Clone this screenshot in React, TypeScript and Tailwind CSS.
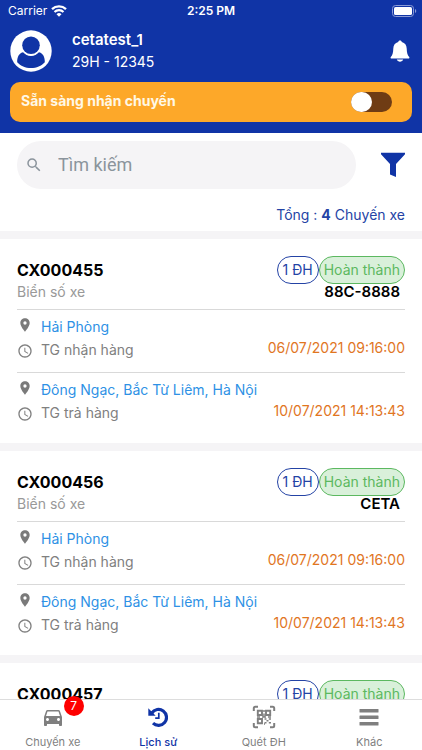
import React, { useState } from "react";
import { MdAccessTime, MdDirectionsCar, MdPlace, MdSearch } from "react-icons/md";

const trips = [
  { code: "CX000455", plate: "88C-8888" },
  { code: "CX000456", plate: "CETA" },
  { code: "CX000457", plate: "88C-8888" },
];

function StatusBar() {
  return (
    <div className="grid grid-cols-3 items-center h-[22px] px-2">
      <div className="flex items-center gap-1">
        <span className="text-[12px] leading-4">Carrier</span>
        <svg viewBox="0 0 16 12" className="w-4 h-3" fill="none">
          <path d="M1 4.200a10.200 10.200 0 0 1 14 0" stroke="#fff" strokeWidth="2.300" />
          <path d="M3.500 7a6.400 6.400 0 0 1 9 0" stroke="#fff" strokeWidth="2.100" />
          <path d="M8 11.800 5.500 9.200a3.600 3.600 0 0 1 5 0z" fill="#fff" />
        </svg>
      </div>
      <span className="text-[12px] leading-4 font-semibold text-center">
        2:25 PM
      </span>
      <svg viewBox="0 0 26 12" className="w-[26px] h-3 justify-self-end -mr-1">
        <rect x="0.5" y="0.5" width="21" height="11" rx="3" fill="none" stroke="#8b9bd6" />
        <rect x="2" y="2" width="18" height="8" rx="1.6" fill="#fff" />
        <path d="M23 4v4a2.200 2.200 0 0 0 0-4z" fill="#8b9bd6" />
      </svg>
    </div>
  );
}

function Header() {
  const [ready, setReady] = useState(false);
  return (
    <header className="bg-[#1034a6] text-white pb-[11px] shrink-0">
      <StatusBar />
      <div className="flex items-center pl-[10px] pr-3 pb-[2px] h-[60px]">
        <svg viewBox="0 0 42 42" className="w-[42px] h-[42px]">
          <circle cx="21" cy="21" r="20.700" fill="#fff" />
          <path
            d="M7.200 32.200C7 27 9.500 22.600 13.300 22.300C15 24.500 17.800 26 21 26S27 24.500 28.700 22.300C32.500 22.600 35 27 34.800 32.200C31.500 35.800 26.500 38 21 38S10.500 35.800 7.200 32.200z"
            fill="#1034a6"
          />
          <circle cx="21" cy="15.200" r="10.300" fill="#fff" />
          <circle cx="21" cy="15.200" r="8.800" fill="#1034a6" />
        </svg>
        <div className="flex-1 pl-5">
          <p className="text-[15px] leading-[22px] font-semibold">cetatest_1</p>
          <p className="text-[14px] leading-[22px]">29H - 12345</p>
        </div>
        <button type="button" aria-label="Thông báo">
          <svg viewBox="0 0 20 22" className="w-5 h-[22px]" fill="#fff">
            <path d="M10 0.500c1 0 1.700.6 1.800 1.500c3.200.8 4.800 3.300 4.900 6.500c.1 4.700.9 6.800 2.300 8.200c.8.800.4 1.800-.6 1.800H1.600c-1 0-1.400-1-.6-1.800c1.400-1.400 2.200-3.500 2.300-8.200c.1-3.200 1.700-5.700 4.900-6.500c.1-.9.8-1.500 1.800-1.500z" />
            <path d="M6.800 19.600h6.400c-.5 1.300-1.700 2.100-3.200 2.100s-2.700-.8-3.200-2.100z" />
          </svg>
        </button>
      </div>
      <label className="mx-[10px] h-10 pl-[11px] pr-5 rounded-[10px] bg-[#fda829] flex items-center justify-between">
        <span className="text-[14px] leading-5 pb-[2px] font-bold text-[#fff8e6]">
          Sẵn sàng nhận chuyến
        </span>
        <input
          type="checkbox"
          checked={ready}
          onChange={() => setReady(!ready)}
          className="appearance-none w-[41px] h-5 rounded-full bg-[#6f3c14] flex items-center before:content-[''] before:w-[21px] before:h-5 before:rounded-full before:bg-white checked:justify-end"
        />
      </label>
    </header>
  );
}

function Search() {
  return (
    <div>
      <div className="flex items-center justify-between pl-[17px] pr-4 pt-2">
        <label className="flex items-center gap-[15px] flex-1 h-12 rounded-full bg-[#f5f4f6] pl-2 mr-6">
          <MdSearch className="w-[18px] h-[18px] text-[#8b949c]" />
          <input
            type="text"
            aria-label="Tìm kiếm"
            placeholder="Tìm kiếm"
            className="flex-1 min-w-0 bg-transparent outline-none text-[18px] leading-6 font-[Roboto,sans-serif] placeholder:text-[#8b949c]"
          />
        </label>
        <button type="button" aria-label="Bộ lọc">
          <svg viewBox="0 0 26 26" className="w-[26px] h-[26px]" fill="#1034a6">
            <path d="M1 .8h24v1.400L16 12v13l-6-2.600V12L1 2.200z" />
          </svg>
        </button>
      </div>
      <p className="text-right text-[14px] leading-5 text-[#2443a5] px-[17px] pt-4 pb-[6px]">
        Tổng : <b>4</b> Chuyến xe
      </p>
    </div>
  );
}

function Stop({ place, label, time }: { place: string; label: string; time: string }) {
  return (
    <div className="border-t border-[#d9d9d9] pt-[6px] h-[63px]">
      <div className="flex items-center h-[22px]">
        <MdPlace className="w-4 h-4 -mt-1 text-[#7a7a7a]" />
        <a href="#map" className="pl-2 text-[14px] leading-[22px] text-[#2e91e5]">
          {place}
        </a>
      </div>
      <div className="flex items-center h-6">
        <MdAccessTime className="w-4 h-4 mt-[2px] text-[#808080]" />
        <span className="pl-2 flex-1 text-[14px] leading-6 text-[#808080]">
          {label}
        </span>
        <span className="text-[14px] leading-5 pb-1 text-[#e1761f]">{time}</span>
      </div>
    </div>
  );
}

function TripCard({ code, plate }: { code: string; plate: string }) {
  return (
    <li className="border-t-8 border-[#f5f4f6] px-[17px] pt-[17px] pb-2">
      <div className="flex items-center h-7">
        <h2 className="flex-1 text-[16px] leading-6 font-bold text-black">{code}</h2>
        <span className="h-7 px-[5px] rounded-full border border-[#2443a5] text-[14px] leading-[26px] text-[#2443a5]">
          1 ĐH
        </span>
        <span className="h-7 px-1 rounded-full border border-[#5cb860] bg-[#d9f0da] text-[14px] leading-[26px] text-[#5cb860]">
          Hoàn thành
        </span>
      </div>
      <div className="flex justify-between h-[25px] pr-[5px]">
        <span className="text-[14px] leading-4 text-[#999999]">Biển số xe</span>
        <span className="text-[15px] leading-4 font-semibold text-black">{plate}</span>
      </div>
      <Stop place="Hải Phòng" label="TG nhận hàng" time="06/07/2021 09:16:00" />
      <Stop
        place="Đông Ngạc, Bắc Từ Liêm, Hà Nội"
        label="TG trả hàng"
        time="10/07/2021 14:13:43"
      />
    </li>
  );
}

function HistoryIcon() {
  return (
    <svg viewBox="0 0 20 26" className="w-5 h-[26px]" fill="none" stroke="currentColor">
      <path d="M3.800 9A8 8 0 1 1 5 19.200" strokeWidth="3.200" />
      <path d="M.3 4.300v7.400h7.400z" fill="currentColor" stroke="none" />
      <path d="M10.800 8.800v5.400H7.200" strokeWidth="1.700" />
    </svg>
  );
}

function QrIcon() {
  return (
    <svg viewBox="0 0 24 24" className="w-6 h-[26px]" fill="none" stroke="currentColor">
      <path
        d="M1.800 6V3.300A1.500 1.500 0 0 1 3.300 1.800H6M18 1.800h2.700a1.500 1.500 0 0 1 1.500 1.500V6M22.200 18v2.700a1.500 1.500 0 0 1-1.500 1.500H18M6 22.200H3.300a1.500 1.500 0 0 1-1.500-1.500V18"
        strokeWidth="2"
      />
      <path d="M5.800 5.800h4.200v4.200H5.800zM14 5.800h4.200v4.200H14zM5.800 14h4.200v4.200H5.800z" strokeWidth="1.900" />
      <path
        d="M12 5v2M12 8.500v3.500M5 12h3M10 12h4M16 12h3M12.500 14h2M14.500 15.800h2M16.800 14h2.200M12.500 17.800h2M16.800 17.800h2.200M12 19h1"
        strokeWidth="1.500"
      />
    </svg>
  );
}

function TabBar() {
  const tab = "flex flex-col items-center gap-1 pt-1 text-[11px] leading-4";
  return (
    <nav className="shrink-0 h-[51px] grid grid-cols-4 border-t border-[#dddddd] bg-white text-[#7f7f7f]">
      <a href="#trips" className={tab}>
        <span className="relative">
          <MdDirectionsCar className="w-6 h-[26px]" />
          <span className="absolute left-[23px] -top-2 w-5 h-5 rounded-full bg-[#fe0000] text-white text-[12px] leading-5 text-center">
            7
          </span>
        </span>
        Chuyến xe
      </a>
      <a href="#history" className={tab + " font-medium text-[#1034a6]"}>
        <HistoryIcon />
        Lịch sử
      </a>
      <a href="#scan" className={tab}>
        <QrIcon />
        Quét ĐH
      </a>
      <a href="#more" className={tab}>
        <svg viewBox="0 0 20 26" className="w-5 h-[26px]" fill="currentColor">
          <rect x="0.500" y="5" width="19" height="3.600" rx="0.500" />
          <rect x="0.500" y="11.500" width="19" height="3.600" rx="0.500" />
          <rect x="0.500" y="18" width="19" height="3.600" rx="0.500" />
        </svg>
        Khác
      </a>
    </nav>
  );
}

function App() {
  return (
    <div className="h-screen flex flex-col bg-white font-[Inter,'Noto_Sans',sans-serif]">
      <Header />
      <main className="flex-1 min-h-0 flex flex-col">
        <Search />
        <ul className="flex-1 min-h-0 overflow-hidden">
          {trips.map((trip) => (
            <TripCard key={trip.code} code={trip.code} plate={trip.plate} />
          ))}
        </ul>
      </main>
      <TabBar />
    </div>
  );
}

export default App;
